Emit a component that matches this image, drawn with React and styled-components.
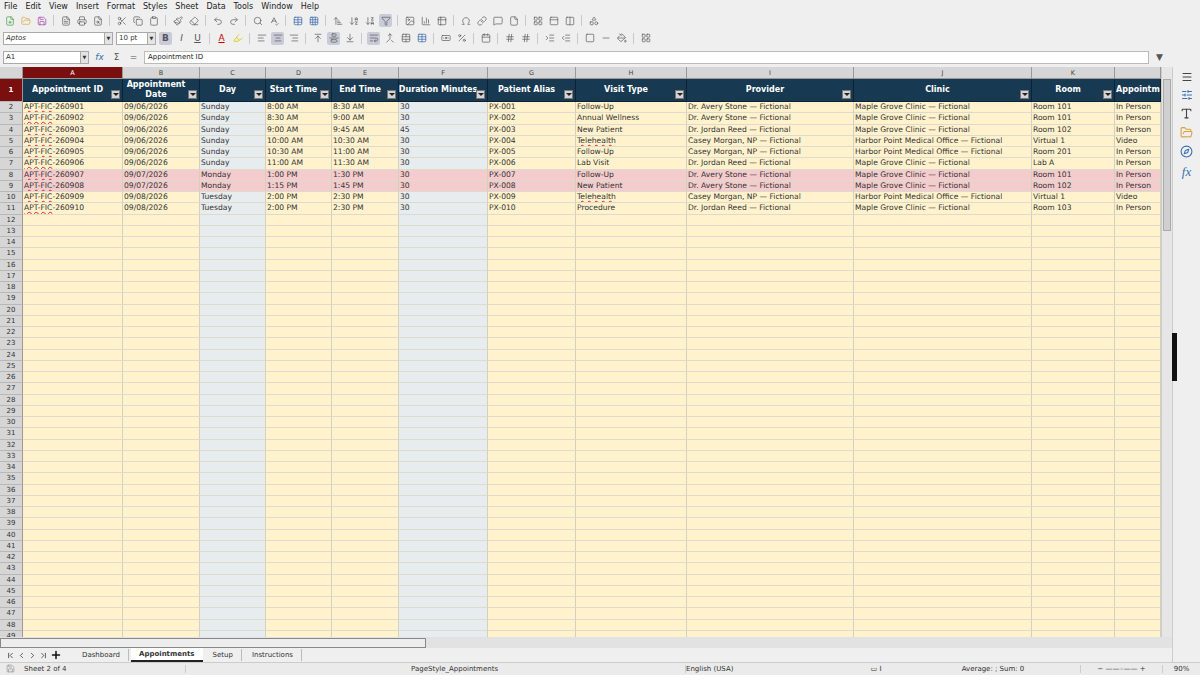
import React from "react";
import styled, { createGlobalStyle } from "styled-components";
import * as L from "lucide-react";

const G = createGlobalStyle`
  body{margin:0;font-family:"DejaVu Sans",sans-serif;background:#efefef;overflow:hidden}
  *{box-sizing:border-box}
`;
const Page = styled.div`width:1200px;height:675px;display:flex;flex-direction:column;background:#efefef;`;
const Menu = styled.div`height:12px;display:flex;gap:8px;padding-left:4px;font-size:8px;color:#222;align-items:center;`;
const Bar = styled.div`height:${p => p.h}px;display:flex;align-items:center;gap:${p => p.gap || 3}px;padding-left:3px;color:#555;`;
const Sep = styled.span`width:1px;height:11px;background:#c8c8c8;margin:0 2px;`;
const Combo = styled.div`width:${p => p.w}px;height:13px;background:#fff;border:1px solid #aaa;font-size:7px;display:flex;align-items:center;justify-content:space-between;padding-left:2px;font-style:${p => p.it ? "italic" : "normal"};color:#333;`;
const Arrow = styled.span`width:8px;height:11px;background:#e4e4e4;border-left:1px solid #aaa;font-size:5px;display:flex;align-items:center;justify-content:center;`;
const Btn = styled.span`display:flex;align-items:center;justify-content:center;width:13px;height:13px;border-radius:2px;background:${p => p.on ? "#c9cbd9" : "transparent"};color:${p => p.c || "#555"};font-size:9px;font-weight:${p => p.b ? "bold" : "normal"};font-style:${p => p.i ? "italic" : "normal"};text-decoration:${p => p.u ? "underline" : "none"};`;
const Formula = styled.div`flex:1;height:13px;background:#fff;border:1px solid #bbb;font-size:7px;display:flex;align-items:center;padding-left:3px;color:#222;`;

const Main = styled.div`flex:1;display:flex;min-height:0;`;
const SheetCol = styled.div`flex:1;display:flex;flex-direction:column;min-width:0;`;
const Grid = styled.div`height:571px;display:flex;overflow:hidden;`;
const Cells = styled.div`width:1161px;display:flex;flex-direction:column;overflow:hidden;`;
const VScroll = styled.div`width:11px;background:#e6e6e6;border-left:1px solid #ccc;position:relative;`;
const Thumb = styled.div`position:absolute;left:1px;right:1px;top:12px;height:152px;background:#cfcfcf;border:1px solid #aaa;`;
const ColW = [23, 100, 77, 66, 66, 67, 89, 88, 111, 167, 178, 83, 46];
const Row = styled.div`display:flex;height:${p => p.h}px;flex-shrink:0;`;
const Cell = styled.div`width:${p => p.w}px;flex-shrink:0;height:100%;background:${p => p.bg};border-right:1px solid #d4d0c0;border-bottom:1px solid #dedbcc;font-size:7.6px;color:#333;white-space:nowrap;overflow:hidden;padding-left:1px;line-height:${p => p.h - 1}px;`;
const RH = styled.div`width:23px;flex-shrink:0;height:100%;background:${p => p.sel ? "#7a0f0f" : "#d6d6d6"};color:${p => p.sel ? "#fff" : "#333"};border-right:1px solid #999;border-bottom:1px solid #b8b8b8;font-size:7px;display:flex;align-items:center;justify-content:center;font-weight:${p => p.sel ? "bold" : "normal"};`;
const CH = styled.div`width:${p => p.w}px;flex-shrink:0;background:${p => p.sel ? "#7a0f0f" : "#d6d6d6"};color:${p => p.sel ? "#fff" : "#444"};border-right:1px solid #999;border-bottom:1px solid #999;font-size:6.5px;display:flex;align-items:center;justify-content:center;`;
const HCell = styled.div`width:${p => p.w}px;flex-shrink:0;height:100%;background:#173a52;color:#fff;font-weight:bold;font-size:8px;border-right:1px solid #0c2233;border-bottom:1px solid #0c2233;position:relative;display:flex;align-items:center;justify-content:${p => p.left ? "flex-start" : "center"};text-align:center;line-height:10px;padding:${p => p.left ? "0 0 0 1px" : "0 12px 0 2px"};white-space:${p => p.wrap ? "normal" : "nowrap"};overflow:hidden;`;
const Drop = styled.span`position:absolute;right:2px;bottom:2px;width:9px;height:9px;background:#d4d4d4;border:1px solid #777;display:flex;align-items:center;justify-content:center;&:after{content:"";border-left:3px solid transparent;border-right:3px solid transparent;border-top:3px solid #222;}`;
const Spell = styled.span`text-decoration:underline wavy #d22;text-decoration-thickness:0.5px;text-underline-offset:1px;`;

const Side = styled.div`width:28px;border-left:1px solid #ccc;display:flex;flex-direction:column;align-items:center;gap:6px;padding-top:4px;position:relative;color:#3a6fb0;`;
const Handle = styled.div`position:absolute;left:-1px;top:266px;width:5px;height:48px;background:#111;`;
const HBarRow = styled.div`height:11px;display:flex;align-items:center;background:#e2e2e2;`;
const HScroll = styled.div`width:426px;height:10px;border:1px solid #888;background:#ededed;`;
const Tabs = styled.div`height:14px;display:flex;align-items:center;font-size:7px;color:#333;gap:2px;padding-left:6px;`;
const Tab = styled.span`padding:2px 8px;${p => p.on ? "font-weight:bold;background:#fff;border-bottom:2px solid #222;" : "border-right:1px solid #bbb;"}`;
const Status = styled.div`height:13px;display:flex;align-items:center;font-size:7px;color:#333;border-top:1px solid #ccc;background:#ebebeb;`;
const SItem = styled.span`width:${p => p.w}px;padding-left:${p => p.pl || 0}px;text-align:${p => p.a || "left"};border-right:${p => p.br ? "1px solid #ccc" : "none"};`;

const headers = [["Appointment ID"], ["Appointment Date", 1], ["Day"], ["Start Time"], ["End Time"], ["Duration Minutes"], ["Patient Alias"], ["Visit Type"], ["Provider"], ["Clinic"], ["Room"], ["Appointm", 0, 1]];
const D = [
  ["260901", "09/06/2026", "Sunday", "8:00 AM", "8:30 AM", "30", "PX-001", "Follow-Up", "Dr. Avery Stone — Fictional", "Maple Grove Clinic — Fictional", "Room 101", "In Person"],
  ["260902", "09/06/2026", "Sunday", "8:30 AM", "9:00 AM", "30", "PX-002", "Annual Wellness", "Dr. Avery Stone — Fictional", "Maple Grove Clinic — Fictional", "Room 101", "In Person"],
  ["260903", "09/06/2026", "Sunday", "9:00 AM", "9:45 AM", "45", "PX-003", "New Patient", "Dr. Jordan Reed — Fictional", "Maple Grove Clinic — Fictional", "Room 102", "In Person"],
  ["260904", "09/06/2026", "Sunday", "10:00 AM", "10:30 AM", "30", "PX-004", "Telehealth", "Casey Morgan, NP — Fictional", "Harbor Point Medical Office — Fictional", "Virtual 1", "Video"],
  ["260905", "09/06/2026", "Sunday", "10:30 AM", "11:00 AM", "30", "PX-005", "Follow-Up", "Casey Morgan, NP — Fictional", "Harbor Point Medical Office — Fictional", "Room 201", "In Person"],
  ["260906", "09/06/2026", "Sunday", "11:00 AM", "11:30 AM", "30", "PX-006", "Lab Visit", "Dr. Jordan Reed — Fictional", "Maple Grove Clinic — Fictional", "Lab A", "In Person"],
  ["260907", "09/07/2026", "Monday", "1:00 PM", "1:30 PM", "30", "PX-007", "Follow-Up", "Dr. Avery Stone — Fictional", "Maple Grove Clinic — Fictional", "Room 101", "In Person", 1],
  ["260908", "09/07/2026", "Monday", "1:15 PM", "1:45 PM", "30", "PX-008", "New Patient", "Dr. Avery Stone — Fictional", "Maple Grove Clinic — Fictional", "Room 102", "In Person", 1],
  ["260909", "09/08/2026", "Tuesday", "2:00 PM", "2:30 PM", "30", "PX-009", "Telehealth", "Casey Morgan, NP — Fictional", "Harbor Point Medical Office — Fictional", "Virtual 1", "Video"],
  ["260910", "09/08/2026", "Tuesday", "2:00 PM", "2:30 PM", "30", "PX-010", "Procedure", "Dr. Jordan Reed — Fictional", "Maple Grove Clinic — Fictional", "Room 103", "In Person"],
];
const bgFor = (ci, pink) => pink ? "#f4cccd" : (ci === 2 || ci === 5) ? "#e7ecef" : "#fff2cc";

const icons1 = [L.FilePlus, L.FolderOpen, L.Save, 0, L.FileText, L.Printer, L.FileSearch, 0, L.Scissors, L.Copy, L.Clipboard, 0, L.Paintbrush, L.Eraser, 0, L.Undo2, L.Redo2, 0, L.Search, L.SpellCheck, 0, L.Table, L.Grid3x3, 0, L.SortAsc, L.ArrowDownAZ, L.ArrowDownZA, L.Filter, 0, L.Image, L.BarChart3, L.Table2, 0, L.Omega, L.Link, L.MessageSquare, L.File, 0, L.LayoutGrid, L.PanelTop, L.Columns2, 0, L.Shapes];
const icons2 = [L.AlignLeft, L.AlignCenter, L.AlignRight, 0, L.ArrowUpToLine, L.AlignVerticalJustifyCenter, L.ArrowDownToLine, 0, L.WrapText, L.Merge, L.TableCellsMerge, L.Table, 0, L.Banknote, L.Percent, 0, L.Calendar, 0, L.Hash, L.Hash, 0, L.IndentIncrease, L.IndentDecrease, 0, L.Square, L.Minus, L.PaintBucket, 0, L.LayoutGrid];
const colorOf = I => I === L.Save ? "#9a3aa8" : I === L.FolderOpen ? "#d9a23c" : I === L.FilePlus ? "#3a9a3a" : (I === L.Table || I === L.Grid3x3) ? "#2f5fa8" : undefined;
const Ic = ({ list }) => list.map((I, i) => I ? <Btn key={i} on={I === L.Filter || I === L.AlignCenter || I === L.AlignVerticalJustifyCenter || I === L.WrapText}><I size={10} strokeWidth={1.6} color={colorOf(I)} /></Btn> : <Sep key={i} />);

export default function App() {
  return (
    <Page>
      <G />
      <Menu>{["File", "Edit", "View", "Insert", "Format", "Styles", "Sheet", "Data", "Tools", "Window", "Help"].map(m => <span key={m}>{m}</span>)}</Menu>
      <Bar h={17}><Ic list={icons1} /></Bar>
      <Bar h={18}>
        <Combo w={110} it>Aptos<Arrow>▼</Arrow></Combo>
        <Combo w={40}>10 pt<Arrow>▼</Arrow></Combo>
        <Btn on b>B</Btn><Btn i>I</Btn><Btn u>U</Btn><Sep />
        <Btn c="#c00" u>A</Btn><Btn c="#d8c600"><L.Highlighter size={10} /></Btn><Sep />
        <Ic list={icons2} />
      </Bar>
      <Bar h={20} gap={4}>
        <Combo w={86}>A1<Arrow>▼</Arrow></Combo>
        <Btn c="#3a6fb0" i>fx</Btn><Btn>Σ</Btn><Btn>=</Btn>
        <Formula>Appointment ID</Formula>
        <Btn>▼</Btn><span style={{ width: 30 }} />
      </Bar>
      <Main>
        <SheetCol>
          <Grid>
            <Cells>
              <Row h={12}>{ColW.map((w, i) => <CH key={i} w={w} sel={i === 1}>{i && i < 12 ? "ABCDEFGHIJKL"[i - 1] : ""}</CH>)}</Row>
              <Row h={23}>
                <RH sel>1</RH>
                {headers.map(([t, wrap, nod], i) => <HCell key={i} w={ColW[i + 1]} wrap={wrap} left={nod}>{t}{!nod && <Drop />}</HCell>)}
              </Row>
              {Array.from({ length: 48 }, (_, r) => {
                const d = D[r];
                const pink = d && d[12];
                return (
                  <Row h={11.25} key={r}>
                    <RH>{r + 2}</RH>
                    {ColW.slice(1).map((w, ci) => (
                      <Cell key={ci} w={w} h={11.25} bg={bgFor(ci, pink)}>
                        {d ? (ci === 0 ? <><Spell>APT-FIC</Spell>-{d[0]}</> : d[ci] === "Telehealth" ? <Spell>Telehealth</Spell> : d[ci]) : ""}
                      </Cell>
                    ))}
                  </Row>
                );
              })}
            </Cells>
            <VScroll><Thumb /></VScroll>
          </Grid>
          <HBarRow><HScroll /></HBarRow>
          <Tabs>
            <L.ChevronFirst size={9} /><L.ChevronLeft size={9} /><L.ChevronRight size={9} /><L.ChevronLast size={9} />
            <L.Plus size={12} strokeWidth={3} color="#111" />
            <span style={{ width: 8 }} />
            <Tab>Dashboard</Tab><Tab on>Appointments</Tab><Tab>Setup</Tab><Tab>Instructions</Tab>
          </Tabs>
        </SheetCol>
        <Side>
          <Handle />
          <L.Menu size={12} color="#444" /><L.SlidersHorizontal size={12} /><L.Type size={13} color="#444" /><L.FolderOpen size={13} color="#d9a23c" /><L.Compass size={13} /><span style={{ fontStyle: "italic", fontFamily: "Liberation Serif,serif", fontSize: 13 }}>fx</span>
        </Side>
      </Main>
      <Status>
        <SItem w={24} pl={6}><L.Save size={9} color="#999" /></SItem>
        <SItem w={162} br>Sheet 2 of 4</SItem>
        <SItem w={500} pl={225} br>PageStyle_Appointments</SItem>
        <SItem w={160}>English (USA)</SItem>
        <SItem w={60} a="center">▭ I</SItem>
        <SItem w={175} a="center" br>Average: ; Sum: 0</SItem>
        <SItem w={82} a="center" br>− ——◦—— +</SItem>
        <SItem w={37} a="center">90%</SItem>
      </Status>
    </Page>
  );
}
